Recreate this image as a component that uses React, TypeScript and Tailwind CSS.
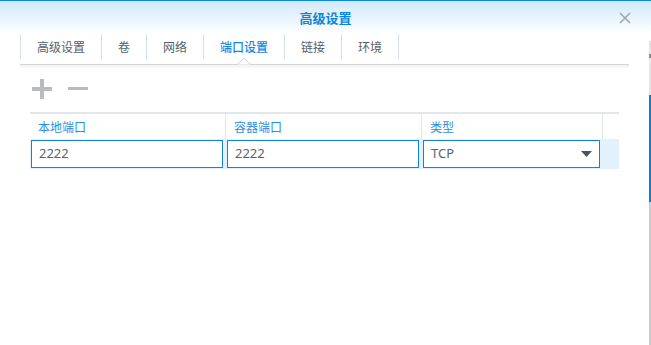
import React from "react";

const tabs = ["高级设置", "卷", "网络", "端口设置", "链接", "环境"];
const font = { fontFamily: '"Noto Sans CJK SC", "Noto Sans", sans-serif' };
const numFont = { fontFamily: '"Noto Sans", "Noto Sans CJK SC", sans-serif' };

export default function App() {
  return (
    <div
      className="relative w-[651px] h-[345px] overflow-hidden bg-white border-t border-[#0a86e3]"
      style={font}
    >
      {/* right strip */}
      <div className="absolute right-0 top-0 w-[2px] h-full flex flex-col">
        <div className="h-[40px] bg-white" />
        <div className="h-[13px] bg-[#e2e2e2]" />
        <div className="h-[4px] bg-[#8c8c8c]" />
        <div className="h-[37px] bg-[#e6e6e6]" />
        <div className="h-[107px] bg-[#0a7fcf]" />
        <div className="flex-1 bg-[#cccccc]" />
      </div>

      {/* header */}
      <div className="relative h-[33px] bg-gradient-to-b from-[#d2e9fa] to-white flex items-center justify-center">
        <span className="text-[13px] font-bold text-[#0a86e0] leading-none">高级设置</span>
        <svg
          className="absolute left-[619px] top-[11px]"
          width="12"
          height="12"
          viewBox="0 0 12 12"
        >
          <path d="M1 1 L11 11 M11 1 L1 11" stroke="#9ea7ae" strokeWidth="1.6" />
        </svg>
      </div>

      {/* tabs */}
      <div className="ml-[20px] w-[609px]">
        <div className="flex h-[25px] border-l border-[#d8e0e7]">
          {tabs.map((t, i) => (
            <div
              key={t}
              className={
                "relative h-full px-4 flex items-center border-r border-[#d8e0e7] text-[12px] leading-none " +
                (i === 3 ? "text-[#1388e4] font-medium" : "text-[#555e68]")
              }
            >
              {t}
              {i === 3 && (
                <svg
                  className="absolute left-1/2 -translate-x-1/2 top-[24px]"
                  width="14"
                  height="7"
                  viewBox="0 0 14 7"
                >
                  <path d="M0 6.5 L7 0.5 L14 6.5" fill="white" stroke="#cfd4d8" strokeWidth="1" />
                </svg>
              )}
            </div>
          ))}
        </div>
        <div className="h-[5px]" />
        <div className="h-px bg-[#d2d4d6]" />
        <div className="h-[4px] bg-gradient-to-b from-[#f0f1f2] to-white" />
      </div>

      {/* toolbar */}
      <div className="ml-[32px] mt-[10px] flex items-center gap-[16px] h-[20px]">
        <svg width="20" height="20" viewBox="0 0 20 20">
          <rect x="8" y="0" width="4" height="20" fill="#b7bcc1" />
          <rect x="0" y="8" width="20" height="4" fill="#b7bcc1" />
        </svg>
        <svg width="20" height="20" viewBox="0 0 20 20">
          <rect x="0" y="8" width="20" height="3" fill="#b7bcc1" />
        </svg>
      </div>

      {/* table */}
      <div className="ml-[30px] mt-[13px] w-[589px]">
        <div className="h-[2px] bg-[#e1e6ea]" />
        <div className="grid grid-cols-[196px_196px_181px_16px] h-[25px]">
          <div className="border-r border-[#e1e6ea] pl-[8px] flex items-center text-[12px] text-[#2a8fe2]">本地端口</div>
          <div className="border-r border-[#e1e6ea] pl-[8px] flex items-center text-[12px] text-[#2a8fe2]">容器端口</div>
          <div className="border-r border-[#e1e6ea] pl-[8px] flex items-center text-[12px] text-[#2a8fe2]">类型</div>
          <div />
        </div>
        <div className="grid grid-cols-[196px_196px_181px_16px] h-[30px] bg-[#e2f2fc] items-center">
          <div className="pl-px">
            <div className="w-[192px] h-[28px] bg-white border border-[#1383d8] flex items-center pl-[7px] text-[13px] text-[#5a636c]" style={numFont}>
              2222
            </div>
          </div>
          <div className="pl-px">
            <div className="w-[192px] h-[28px] bg-white border border-[#1383d8] flex items-center pl-[7px] text-[13px] text-[#5a636c]" style={numFont}>
              2222
            </div>
          </div>
          <div className="pl-px">
            <div className="w-[177px] h-[28px] bg-white border border-[#1383d8] flex items-center justify-between pl-[7px] pr-[7px] text-[13px] text-[#5a636c]" style={numFont}>
              <span>TCP</span>
              <svg width="11" height="6" viewBox="0 0 11 6">
                <path d="M0 0 H11 L5.5 6 Z" fill="#4b555f" />
              </svg>
            </div>
          </div>
          <div />
        </div>
      </div>
    </div>
  );
}
